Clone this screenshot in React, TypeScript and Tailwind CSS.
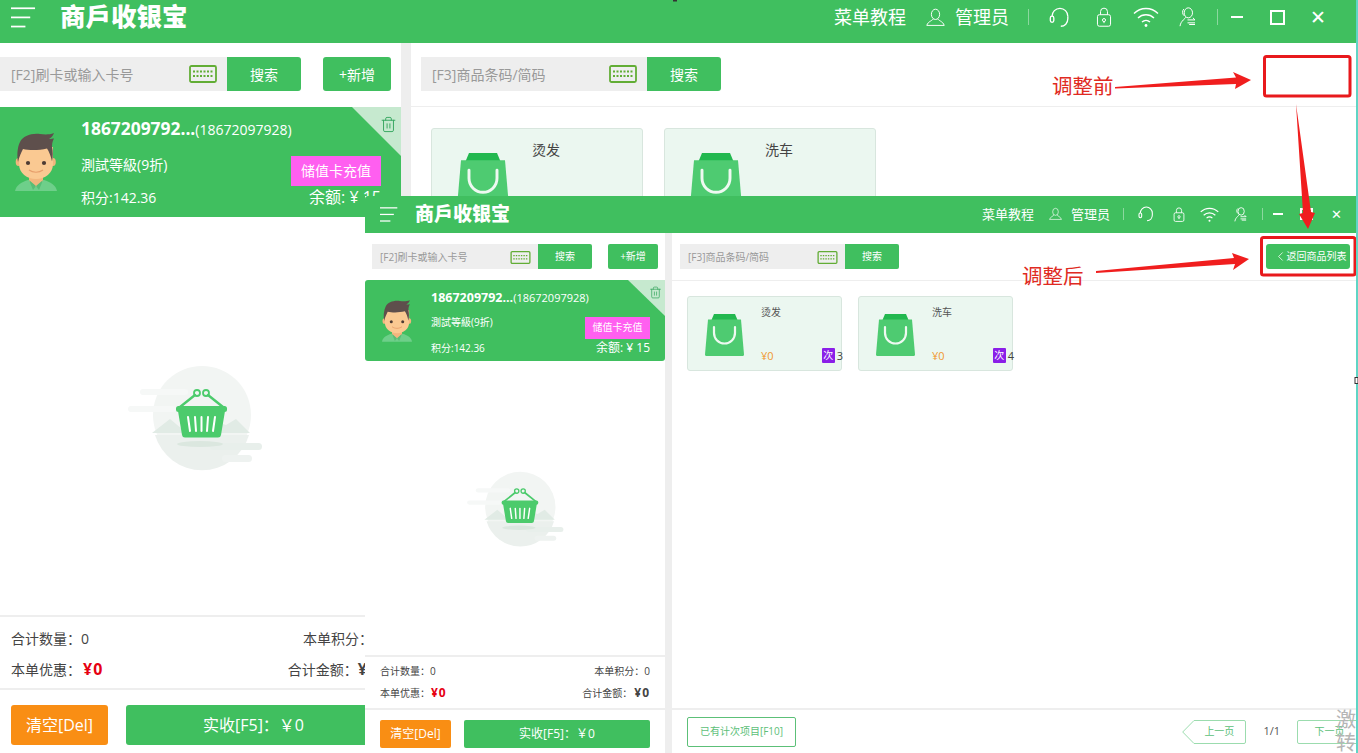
import React from "react";
import { Trash2, ChevronLeft } from "lucide-react";

type S = { w: number; h?: number; sw?: number };

const MenuIcon = ({ w, h }: { w: number; h: number }) => (
  <svg width={w} height={h} viewBox="0 0 26 21" fill="white">
    <rect x="0" y="0" width="25" height="1.8" />
    <rect x="0" y="9.5" width="20" height="1.8" />
    <rect x="0" y="19" width="15" height="1.8" />
  </svg>
);
const UserIcon = ({ w, h, sw = 1.2 }: S) => (
  <svg width={w} height={h} viewBox="0 0 24 24" fill="none" stroke="white" strokeWidth={sw} className="shrink-0">
    <ellipse cx="12" cy="8" rx="5.2" ry="6.5" />
    <path d="M9 13.5c0 2.5-6.5 3-8 8.5h22c-1.5-5.5-8-6-8-8.5" strokeLinejoin="round" />
  </svg>
);
const HeadsetIcon = ({ w, h, sw = 1.5 }: S) => (
  <svg width={w} height={h} viewBox="0 0 24 24" fill="none" stroke="white" strokeWidth={sw} className="shrink-0">
    <path d="M3.5 10.5a9 9 0 0 1 18 0" />
    <rect x="1.5" y="10.5" width="4" height="7" rx="2" />
    <path d="M21.5 10.5v3c0 5-3.5 8.5-8 8.5" />
  </svg>
);
const LockIcon = ({ w, h, sw = 1.3 }: S) => (
  <svg width={w} height={h} viewBox="0 0 20 26" fill="none" stroke="white" strokeWidth={sw} className="shrink-0">
    <rect x="1.5" y="10" width="17" height="15" rx="2.5" />
    <path d="M5.5 10V6a4.5 4.5 0 0 1 9 0v4" />
    <circle cx="10" cy="17" r="2" />
    <path d="M10 19v2" />
  </svg>
);
const WifiIcon = ({ w, h, sw = 1.4 }: S) => (
  <svg width={w} height={h} viewBox="0 0 26 20" fill="none" stroke="white" strokeWidth={sw} className="shrink-0">
    <path d="M1 6.5a17 17 0 0 1 24 0" />
    <path d="M5 11a11.5 11.5 0 0 1 16 0" />
    <path d="M9 15a6 6 0 0 1 8 0" />
    <circle cx="13" cy="18.5" r="1.4" fill="white" stroke="none" />
  </svg>
);
const SwitchUserIcon = ({ w, h, sw = 1.2 }: S) => (
  <svg width={w} height={h} viewBox="0 0 20 24" fill="none" stroke="white" strokeWidth={sw} className="shrink-0">
    <ellipse cx="11" cy="7" rx="5" ry="6" />
    <path d="M8 12c0 2-6 4-7 11" />
    <path d="M5.5 2.5c-2 2-2 6 .5 8" />
    <path d="M10 15.5h9l-2.5-2.5" />
    <path d="M10 19h9" />
    <path d="M19 21h-7" />
  </svg>
);
const KeyboardIcon = ({ w, h }: { w: number; h: number }) => (
  <svg width={w} height={h} viewBox="0 0 28 18" fill="none" className="shrink-0">
    <rect x="1" y="1" width="26" height="16" rx="1.5" stroke="#62ad35" strokeWidth="1.8" />
    <path d="M4 6.5h20" stroke="#62ad35" strokeWidth="1.8" strokeDasharray="2 1.5" />
    <path d="M4 11h20" stroke="#62ad35" strokeWidth="1.8" strokeDasharray="2 1.5" />
  </svg>
);
const BagIcon = ({ w, h }: { w: number; h: number }) => (
  <svg width={w} height={h} viewBox="0 0 39 42" className="shrink-0">
    <path d="M9 0h21l2.5 6H6.5z" fill="#22b84f" />
    <path d="M3 5.5h33l3 35a1.5 1.5 0 0 1-1.5 1.5H1.5A1.5 1.5 0 0 1 0 40.5z" fill="#4ecb71" />
    <path d="M9 13v6a10.5 10.5 0 0 0 21 0v-6" fill="none" stroke="#eef9f1" strokeWidth="2.2" strokeLinecap="round" />
  </svg>
);
const Avatar = ({ w, h }: { w: number; h: number }) => (
  <svg width={w} height={h} viewBox="0 0 42 58" className="shrink-0">
    <path d="M0 58c1-6 7-9 13-11h16c6 2 12 5 13 11z" fill="#6ecf8a" />
    <path d="M14 44h14v4l-7 6-7-6z" fill="#f2b67e" />
    <path d="M14 47l7 6-3 4zM28 47l-7 6 3 4z" fill="#58bd76" />
    <ellipse cx="3.5" cy="29" rx="2.8" ry="4" fill="#f2b67e" />
    <ellipse cx="38" cy="29" rx="2.8" ry="4" fill="#f2b67e" />
    <path d="M4 14h34v17c0 9-8 15-17 15S4 40 4 31z" fill="#fac992" />
    <path d="M3 29c-1-6-1-14 2-20C8 3 16 0 25 1c4 .5 9 1 14-1-1 3-3 5-5 6 2 0 4-.5 5-.5-1 2-2 4-2 8 1 5 1 10 0 15-1-5-3-10-5-13-8 2-18 2-24 .5-2 4-4 8-5 13z" fill="#5e4f4c" />
    <circle cx="13" cy="30" r="2.1" fill="#4d3b33" />
    <circle cx="29" cy="30" r="2.1" fill="#4d3b33" />
    <path d="M14 37c4 3 10 3 14 0" stroke="#e79f6c" strokeWidth="1.2" fill="none" />
  </svg>
);
const BasketArt = ({ w, h }: { w: number; h: number }) => (
  <svg width={w} height={h} viewBox="0 0 136 110">
    <circle cx="74" cy="50" r="49" fill="#f2f5f3" />
    <path d="M24 68l18-14 12 10 14-6 8 6 10-8 12 4 10-6 14 14z" fill="#e1ebe5" />
    <path d="M27 70h94a49 49 0 0 1-94 0z" fill="#ebf0ed" />
    <rect x="12" y="24" width="48" height="6" rx="3" fill="#f6f8f7" />
    <rect x="0" y="41" width="48" height="6" rx="3" fill="#f6f8f7" />
    <rect x="82" y="78" width="52" height="7" rx="3.5" fill="#e8efeb" />
    <rect x="94" y="90" width="30" height="7" rx="3.5" fill="#eef2f0" />
    <ellipse cx="72" cy="79" rx="23" ry="3" fill="#dbe7df" />
    <path d="M52 42l15-12M95 42L80 30" stroke="#4ccb6c" strokeWidth="2.4" strokeLinecap="round" />
    <circle cx="69" cy="28" r="3" fill="none" stroke="#4ccb6c" strokeWidth="1.8" />
    <circle cx="78" cy="28" r="3" fill="none" stroke="#4ccb6c" strokeWidth="1.8" />
    <rect x="48" y="41" width="51" height="6" rx="2.5" fill="#4ccb6c" />
    <path d="M50 46h47l-4 24a3 3 0 0 1-3 2.5H57a3 3 0 0 1-3-2.5z" fill="#4ccb6c" />
    <path d="M60 52l2 14M67 52l1 14M73.5 52v14M80 52l-1 14M87 52l-2 14" stroke="white" strokeWidth="2" strokeLinecap="round" />
  </svg>
);

const Vr = ({ cls }: { cls: string }) => <span className={`w-px bg-white/40 shrink-0 ${cls}`} />;

export default function App() {
  return (
    <div className="relative w-[1358px] h-[753px] overflow-hidden bg-white text-[#444] [font-family:'Open_Sans','Noto_Sans_CJK_SC',sans-serif]">
      {/* window before the change */}
      <div className="flex flex-col w-full h-full">
        <header className="flex items-center h-[43px] shrink-0 bg-[#40bf5f] text-white pb-[9px] pr-[34px]">
          <span className="ml-[11px] flex"><MenuIcon w={25} h={21} /></span>
          <span className="ml-[24px] text-[25.5px] leading-none font-black">商戶收银宝</span>
          <span className="ml-auto text-[18px] leading-none">菜单教程</span>
          <span className="ml-[20px] flex"><UserIcon w={19} h={19} /></span>
          <span className="ml-[10px] text-[18px] leading-none">管理员</span>
          <Vr cls="ml-[19px] h-[16px]" />
          <span className="ml-[20px] flex"><HeadsetIcon w={21} h={21} /></span>
          <span className="ml-[26px] flex"><LockIcon w={16} h={20} /></span>
          <span className="ml-[21px] flex"><WifiIcon w={26} h={20} /></span>
          <span className="ml-[20px] flex"><SwitchUserIcon w={17} h={20} /></span>
          <Vr cls="ml-[21px] h-[16px]" />
          <span className="ml-[13px] w-[12px] h-[2px] bg-white" />
          <span className="ml-[27px] w-[15px] h-[15px] border-2 border-white" />
          <span className="ml-[27px] text-[19px] leading-none w-[12px] flex justify-center">✕</span>
        </header>
        <div className="flex flex-1 min-h-0">
          <aside className="flex flex-col w-[401px] shrink-0">
            <div className="flex mt-[14px] h-[34px] text-[14px] shrink-0">
              <div className="flex items-center justify-between w-[227px] pl-[11px] pr-[10px] bg-[#eeeeee] text-[#999]">
                <span>[F2]刷卡或输入卡号</span>
                <KeyboardIcon w={28} h={18} />
              </div>
              <button className="w-[74px] bg-[#40bf5f] text-white rounded-r-[3px]">搜索</button>
              <button className="ml-[22px] w-[68px] bg-[#40bf5f] text-white rounded-[3px]">+新增</button>
            </div>
            <div className="relative flex items-center mt-[16px] h-[110px] shrink-0 bg-[#40bf5f] text-white">
              <svg width="49" height="49" viewBox="0 0 49 49" className="absolute right-0 top-0">
                <path d="M0 0h49v49z" fill="#c6e9cf" />
              </svg>
              <Trash2 size={17} strokeWidth={1.4} className="absolute right-[4px] top-[9px] text-[#3aa862]" />
              <span className="ml-[15px] mr-[24px] flex"><Avatar w={42} h={58} /></span>
              <div className="flex-1 self-start pt-[11px] pr-[20px]">
                <div className="leading-[20px] whitespace-nowrap">
                  <b className="text-[17.4px]">1867209792...</b>
                  <span className="text-[14px]">(18672097928)</span>
                </div>
                <div className="flex justify-between mt-[16px] text-[14px]">
                  <div>
                    <div className="-mt-[2px] leading-[22px]">測試等級(9折)</div>
                    <div className="mt-[12px] leading-[20px]">积分:142.36</div>
                  </div>
                  <div className="flex flex-col items-end">
                    <span className="flex items-center justify-center w-[90px] h-[30px] pb-[2px] bg-[#ff5ff0]">储值卡充值</span>
                    <span className="mt-[1px] text-[16px] leading-[20px]">余额: ¥ 15</span>
                  </div>
                </div>
              </div>
            </div>
            <div className="flex flex-1 items-center justify-center min-h-0 pt-[8px] pr-[9px]">
              <BasketArt w={136} h={110} />
            </div>
            <div className="border-t-2 border-[#eeeeee] pl-[11px] pr-[20px] pt-[11px] pb-[7px] text-[14px] shrink-0">
              <div className="flex justify-between leading-[22px]"><span>合计数量：0</span><span>本单积分：0</span></div>
              <div className="flex justify-between mt-[8px] leading-[22px]">
                <span>本单优惠：<b className="ml-[2px] text-[16px] tracking-[1px] text-[#e60012]">¥0</b></span>
                <span className="pr-[3px]">合计金额：<b className="text-[16px] tracking-[1px]">¥0</b></span>
              </div>
            </div>
            <div className="flex gap-[18px] border-t-2 border-[#eeeeee] pl-[11px] pr-[20px] pt-[15px] h-[65px] text-[16px] text-white shrink-0">
              <button className="w-[97px] h-[40px] bg-[#f98e14] rounded-[3px]">清空[Del]</button>
              <button className="flex-1 h-[40px] bg-[#40bf5f] rounded-[3px]">实收[F5]：￥0</button>
            </div>
          </aside>
          <div className="w-[10px] shrink-0 bg-[#eeeeee]" />
          <main className="flex flex-col flex-1 min-w-0">
            <div className="flex h-[64px] pt-[14px] pl-[10px] text-[14px] border-b border-[#eeeeee] shrink-0">
              <div className="flex items-center justify-between w-[226px] h-[34px] pl-[11px] pr-[10px] bg-[#eeeeee] text-[#999]">
                <span>[F3]商品条码/简码</span>
                <KeyboardIcon w={28} h={18} />
              </div>
              <button className="w-[74px] h-[34px] bg-[#40bf5f] text-white rounded-r-[3px]">搜索</button>
            </div>
            <div className="flex gap-[21px] pl-[20px] pt-[21px]">
              {["烫发", "洗车"].map((t) => (
                <div key={t} className="flex w-[212px] h-[100px] bg-[#ebf7f0] border border-[#d8e6de] rounded-[3px] text-[14px]">
                  <span className="ml-[25px] mt-[24px]"><BagIcon w={52} h={56} /></span>
                  <span className="ml-[23px] mt-[10px]">{t}</span>
                </div>
              ))}
            </div>
          </main>
        </div>
      </div>

      {/* window after the change */}
      <div className="absolute left-[365px] top-[196px] flex flex-col w-[993px] h-[557px] bg-white">
        <header className="flex items-center h-[37px] shrink-0 bg-[#40bf5f] text-white rounded-tl-[3px] pb-[1px] pr-[17px]">
          <span className="ml-[15px] flex"><MenuIcon w={18} h={15} /></span>
          <span className="ml-[17px] text-[19px] leading-none font-black">商戶收银宝</span>
          <span className="ml-auto text-[13px] leading-none">菜单教程</span>
          <span className="ml-[15px] flex"><UserIcon w={13} h={14} /></span>
          <span className="ml-[9px] text-[13px] leading-none">管理员</span>
          <Vr cls="ml-[13px] h-[12px]" />
          <span className="ml-[14px] flex"><HeadsetIcon w={16} h={16} sw={1.6} /></span>
          <span className="ml-[19px] flex"><LockIcon w={12} h={15} sw={1.5} /></span>
          <span className="ml-[15px] flex"><WifiIcon w={19} h={15} sw={1.6} /></span>
          <span className="ml-[15px] flex"><SwitchUserIcon w={13} h={15} sw={1.4} /></span>
          <Vr cls="ml-[15px] h-[12px]" />
          <span className="ml-[10px] w-[10px] h-[1.5px] bg-white" />
          <span className="ml-[17px] w-[13px] h-[12px] border-2 border-white" />
          <span className="ml-[19px] text-[13px] leading-none w-[9px] flex justify-center">✕</span>
        </header>
        <div className="flex flex-1 min-h-0">
          <aside className="flex flex-col w-[300px] shrink-0">
            <div className="flex mt-[11px] ml-[7px] h-[25px] text-[10px] shrink-0">
              <div className="flex items-center justify-between w-[166px] pl-[8px] pr-[7px] pt-[1px] bg-[#eeeeee] text-[#999]">
                <span>[F2]刷卡或输入卡号</span>
                <KeyboardIcon w={21} h={13} />
              </div>
              <button className="w-[54px] bg-[#40bf5f] text-white rounded-r-[2px]">搜索</button>
              <button className="ml-[16px] w-[50px] bg-[#40bf5f] text-white rounded-[2px]">+新增</button>
            </div>
            <div className="relative flex items-center mt-[11px] h-[81px] shrink-0 bg-[#40bf5f] text-white rounded-[3px]">
              <svg width="37" height="36" viewBox="0 0 37 36" className="absolute right-0 top-0">
                <path d="M0 0h37v36z" fill="#c6e9cf" />
              </svg>
              <Trash2 size={13} strokeWidth={1.4} className="absolute right-[3px] top-[6px] text-[#3aa862]" />
              <span className="ml-[17px] mr-[19px] flex"><Avatar w={30} h={42} /></span>
              <div className="flex-1 self-start pt-[8px] pr-[15px]">
                <div className="leading-[16px] whitespace-nowrap">
                  <b className="text-[12.5px]">1867209792...</b>
                  <span className="text-[11px]">(18672097928)</span>
                </div>
                <div className="flex justify-between mt-[11px] text-[10px]">
                  <div>
                    <div className="-mt-[2px] leading-[14px]">測試等級(9折)</div>
                    <div className="mt-[12px] leading-[14px]">积分:142.36</div>
                  </div>
                  <div className="flex flex-col items-end">
                    <span className="flex items-center justify-center w-[65px] h-[22px] pb-[1px] bg-[#ff5ff0]">储值卡充值</span>
                    <span className="mt-[1px] text-[12px] leading-[16px]">余额: ¥ 15</span>
                  </div>
                </div>
              </div>
            </div>
            <div className="flex flex-1 items-center justify-center min-h-0 pt-[4px] pl-[2px]">
              <BasketArt w={98} h={79} />
            </div>
            <div className="border-t-2 border-[#eeeeee] px-[15px] pt-[7px] pb-[8px] text-[10px] shrink-0">
              <div className="flex justify-between leading-[14px]"><span>合计数量：0</span><span>本单积分：0</span></div>
              <div className="flex justify-between mt-[8px] leading-[14px]">
                <span>本单优惠：<b className="ml-[1px] text-[12px] tracking-[1px] text-[#e60012]">¥0</b></span>
                <span>合计金额：<b className="ml-[2px] text-[12px] tracking-[1px]">¥0</b></span>
              </div>
            </div>
            <div className="flex gap-[13px] border-t-2 border-[#eeeeee] px-[15px] pt-[10px] h-[45px] text-[12px] text-white shrink-0">
              <button className="w-[71px] h-[28px] bg-[#f98e14] rounded-[2px]">清空[Del]</button>
              <button className="flex-1 h-[28px] bg-[#40bf5f] rounded-[2px]">实收[F5]：￥0</button>
            </div>
          </aside>
          <div className="w-[7px] shrink-0 bg-[#eeeeee]" />
          <main className="flex flex-col flex-1 min-w-0">
            <div className="flex justify-between h-[48px] pt-[11px] px-[8px] text-[10px] border-b border-[#eeeeee] shrink-0">
              <div className="flex">
                <div className="flex items-center justify-between w-[165px] h-[25px] pl-[8px] pr-[7px] pt-[1px] bg-[#eeeeee] text-[#999]">
                  <span>[F3]商品条码/简码</span>
                  <KeyboardIcon w={21} h={13} />
                </div>
                <button className="w-[54px] h-[25px] bg-[#40bf5f] text-white rounded-r-[2px]">搜索</button>
              </div>
              <button className="flex items-center justify-center w-[84px] h-[25px] pl-[3px] bg-[#40bf5f] text-white rounded-[3px] whitespace-nowrap">
                <ChevronLeft size={15} strokeWidth={1.2} className="shrink-0 -mr-[1px]" />
                <span>返回商品列表</span>
              </button>
            </div>
            <div className="flex flex-1 gap-[16px] pl-[15px] pt-[15px] items-start min-h-0">
              {[["烫发", "3"], ["洗车", "4"]].map(([t, n]) => (
                <div key={t} className="flex w-[155px] h-[75px] bg-[#ebf7f0] border border-[#d8e6de] rounded-[3px]">
                  <span className="ml-[17px] mt-[17px]"><BagIcon w={39} h={42} /></span>
                  <div className="flex flex-col justify-between flex-1 ml-[17px] pt-[8px] pb-[7px] text-[10px]">
                    <span className="leading-[14px] text-[#555]">{t}</span>
                    <div className="flex items-center justify-between leading-[15px]">
                      <span className="text-[11px] text-[#f0982f]">¥0</span>
                      <div className="flex items-center gap-[2px] -mr-[2px]">
                        <span className="flex items-center justify-center w-[13px] h-[15px] bg-[#8a1fe8] text-white rounded-[1px]">次</span>
                        <span className="text-[11px]">{n}</span>
                      </div>
                    </div>
                  </div>
                </div>
              ))}
            </div>
            <div className="flex items-center justify-between h-[45px] pl-[15px] border-t-2 border-[#eeeeee] text-[10px] text-[#5cc078] shrink-0">
              <button className="w-[109px] h-[30px] border border-[#5cc078] rounded-[2px]">已有计次项目[F10]</button>
              <div className="flex items-center shrink-0 -mr-[4px]">
                <span className="relative flex items-center justify-center w-[64px] h-[24px] pl-[10px]">
                  <svg width="64" height="24" viewBox="0 0 64 24" className="absolute inset-0">
                    <path d="M12 .5h50a1.5 1.5 0 0 1 1.5 1.5v20a1.5 1.5 0 0 1-1.5 1.5H12L.7 12z" fill="none" stroke="#9bdcae" />
                  </svg>
                  <span className="relative">上一页</span>
                </span>
                <span className="ml-[17px] mr-[17px] text-[11px] text-[#555]">1/1</span>
                <span className="flex items-center justify-center w-[65px] h-[24px] border border-[#9bdcae] rounded-[2px]">下一页</span>
              </div>
            </div>
          </main>
        </div>
      </div>

      {/* annotations over both windows */}
      <svg width="1358" height="753" viewBox="0 0 1358 753" className="absolute inset-0 pointer-events-none">
        <rect x="1264.5" y="56.5" width="85.5" height="39.5" rx="2" fill="none" stroke="#e8191c" strokeWidth="3" />
        <rect x="1261.5" y="237.5" width="93.5" height="37.5" rx="2" fill="none" stroke="#e8191c" strokeWidth="3" />
        <path d="M1115 87L1236 77.5 1233 72 1251 80 1235 89 1236 84 1115 88.5z" fill="#f01e1e" />
        <path d="M1296 104l15 108 4 1-7 16-9-15 4-1-7-109z" fill="#f01e1e" />
        <path d="M1096 271l138-13-2-5 17 6-16 11 2-6-139 9z" fill="#f01e1e" />
        <rect x="1356" y="0" width="2" height="753" fill="#5fd5c5" />
        <rect x="1355" y="377.5" width="3" height="6" fill="white" stroke="#333" />
        <rect x="673" y="0" width="4" height="1.5" fill="#333" />
      </svg>
      <span className="absolute left-[1052px] top-[72px] text-[20.5px] leading-[28px] text-[#e02a22]">调整前</span>
      <span className="absolute left-[1022px] top-[262px] text-[20.5px] leading-[28px] text-[#e02a22]">调整后</span>
      <span className="absolute left-[1336px] top-[708px] w-[21px] text-[20px] leading-[23px] text-[#b5b5b5]">激转</span>
    </div>
  );
}
